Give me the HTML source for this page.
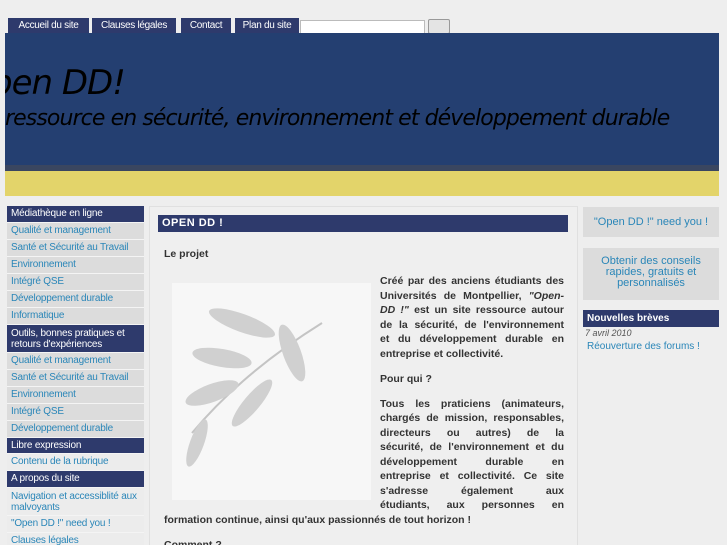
<!DOCTYPE html>
<html><head><meta charset="utf-8"><style>
*{margin:0;padding:0;box-sizing:border-box}
html,body{width:727px;height:545px;overflow:hidden}
body{background:#eeeeee;font-family:"Liberation Sans",sans-serif;position:relative}
.tab{position:absolute;top:18px;height:16px;background:#2e3a6c;color:#fff;font-size:10px;line-height:15px;text-align:center;letter-spacing:-0.3px}
#hdr{position:absolute;left:5px;top:33px;width:714px;height:133px;background:#243f71;overflow:hidden}
#hdr .t1{position:absolute;left:-14px;top:30px;font-size:34px;font-style:italic;color:#000;font-family:"DejaVu Sans",sans-serif;letter-spacing:-1px}
#hdr .t2{position:absolute;left:0;top:73px;font-size:22px;font-style:italic;color:#000;font-family:"DejaVu Sans",sans-serif;letter-spacing:-0.9px}
#line{position:absolute;left:5px;top:165px;width:714px;height:6px;background:#3a4660}
#yel{position:absolute;left:5px;top:171px;width:714px;height:25px;background:#e3d46a}
#left{position:absolute;left:7px;top:206px;width:137px}
#left div{font-size:10px;padding:0 4px;border-bottom:1px solid #f4f4f4;letter-spacing:-0.2px}
#left .h{background:#2e3a6c;color:#fff;height:16.5px;line-height:15px}
#left .l{background:#dcdcdc;color:#2a86b8;height:17px;line-height:16px}
#left .w{background:#ececec}
#center{position:absolute;left:149px;top:206px;width:429px;height:345px;background:#efefef;border:1px solid #e0e0e0}
#bar{position:absolute;left:158px;top:215px;width:410px;height:17px;background:#2e3a6c;color:#fff;font-weight:bold;font-size:11px;line-height:17px;padding-left:4px;letter-spacing:0.5px}
.b{position:absolute;font-size:10.5px;font-weight:bold;color:#333;line-height:14.5px}
#txt{left:380px;top:274px;width:184px}
#txt .j{text-align:justify;text-align-last:justify;white-space:nowrap;height:14.5px}
#txt .n{height:14.5px;white-space:nowrap}
#txt .g{height:10.5px}
#img{position:absolute;left:172px;top:283px;width:199px;height:217px;background:#f7f7f7}
.rbox{position:absolute;left:583px;width:136px;background:#dcdcdc;color:#2a86b8;font-size:11px;text-align:center}
</style></head><body>
<div class="tab" style="left:8px;width:81px">Accueil du site</div>
<div class="tab" style="left:92px;width:84px">Clauses légales</div>
<div class="tab" style="left:181px;width:50px">Contact</div>
<div class="tab" style="left:235px;width:64px">Plan du site</div>
<div style="position:absolute;left:300px;top:20px;width:125px;height:14px;background:#fff;border:1px solid #bbb"></div>
<div style="position:absolute;left:428px;top:19px;width:22px;height:15px;background:#e4e4e4;border:1px solid #999;border-radius:2px"></div>
<div id="hdr"><div class="t1">pen DD!</div><div class="t2">ressource en sécurité, environnement et développement durable</div></div>
<div id="line"></div><div id="yel"></div>
<div id="left">
<div class="h">Médiathèque en ligne</div>
<div class="l">Qualité et management</div>
<div class="l">Santé et Sécurité au Travail</div>
<div class="l">Environnement</div>
<div class="l">Intégré QSE</div>
<div class="l">Développement durable</div>
<div class="l">Informatique</div>
<div class="h" style="height:28px;line-height:11px;padding-top:3px">Outils, bonnes pratiques et retours d'expériences</div>
<div class="l">Qualité et management</div>
<div class="l">Santé et Sécurité au Travail</div>
<div class="l">Environnement</div>
<div class="l">Intégré QSE</div>
<div class="l">Développement durable</div>
<div class="h">Libre expression</div>
<div class="l w">Contenu de la rubrique</div>
<div class="h">A propos du site</div>
<div class="l w" style="height:28px;line-height:11px;padding-top:3px">Navigation et accessiblité aux malvoyants</div>
<div class="l w">"Open DD !" need you !</div>
<div class="l w">Clauses légales</div>
</div>
<div id="center"></div>
<div id="bar">OPEN DD !</div>
<div class="b" style="left:164px;top:247px">Le projet</div>
<div id="img"><svg width="199" height="217"><g fill="#d0d0d0"><path d="M20 150 Q70 90 150 40" stroke="#c4c4c4" stroke-width="2" fill="none"/><ellipse cx="70" cy="40" rx="35" ry="9" transform="rotate(20 70 40)"/><ellipse cx="50" cy="75" rx="30" ry="9" transform="rotate(10 50 75)"/><ellipse cx="40" cy="110" rx="28" ry="9" transform="rotate(-20 40 110)"/><ellipse cx="120" cy="70" rx="30" ry="9" transform="rotate(70 120 70)"/><ellipse cx="25" cy="160" rx="25" ry="7" transform="rotate(-70 25 160)"/><ellipse cx="80" cy="120" rx="30" ry="8" transform="rotate(-50 80 120)"/></g></svg></div>
<div class="b" id="txt">
<div class="j">Créé par des anciens étudiants des</div>
<div class="j">Universités de Montpellier, <i>"Open-</i></div>
<div class="j"><i>DD !"</i> est un site ressource autour</div>
<div class="j">de la sécurité, de l'environnement</div>
<div class="j">et du développement durable en</div>
<div class="n">entreprise et collectivité.</div>
<div class="g"></div>
<div class="n">Pour qui ?</div>
<div class="g"></div>
<div class="j">Tous les praticiens (animateurs,</div>
<div class="j">chargés de mission, responsables,</div>
<div class="j">directeurs ou autres) de la</div>
<div class="j">sécurité, de l'environnement et du</div>
<div class="j">développement durable en</div>
<div class="j">entreprise et collectivité. Ce site</div>
<div class="j">s'adresse également aux</div>
<div class="j">étudiants, aux personnes en</div>
</div>
<div class="b" style="left:164px;top:513px">formation continue, ainsi qu'aux passionnés de tout horizon !</div>
<div class="b" style="left:164px;top:538px">Comment ?</div>
<div class="rbox" style="top:207px;height:30px;line-height:30px">"Open DD !" need you !</div>
<div class="rbox" style="top:248px;height:52px;padding-top:8px;line-height:11px">Obtenir des conseils rapides, gratuits et personnalisés</div>
<div style="position:absolute;left:583px;top:310px;width:136px;height:17px;background:#2e3a6c;color:#fff;font-weight:bold;font-size:10px;line-height:17px;padding-left:4px">Nouvelles brèves</div>
<div style="position:absolute;left:585px;top:328px;font-size:9px;font-style:italic;color:#555">7 avril 2010</div>
<div style="position:absolute;left:587px;top:341px;font-size:10px;color:#2a86b8">Réouverture des forums !</div>
</body></html>
